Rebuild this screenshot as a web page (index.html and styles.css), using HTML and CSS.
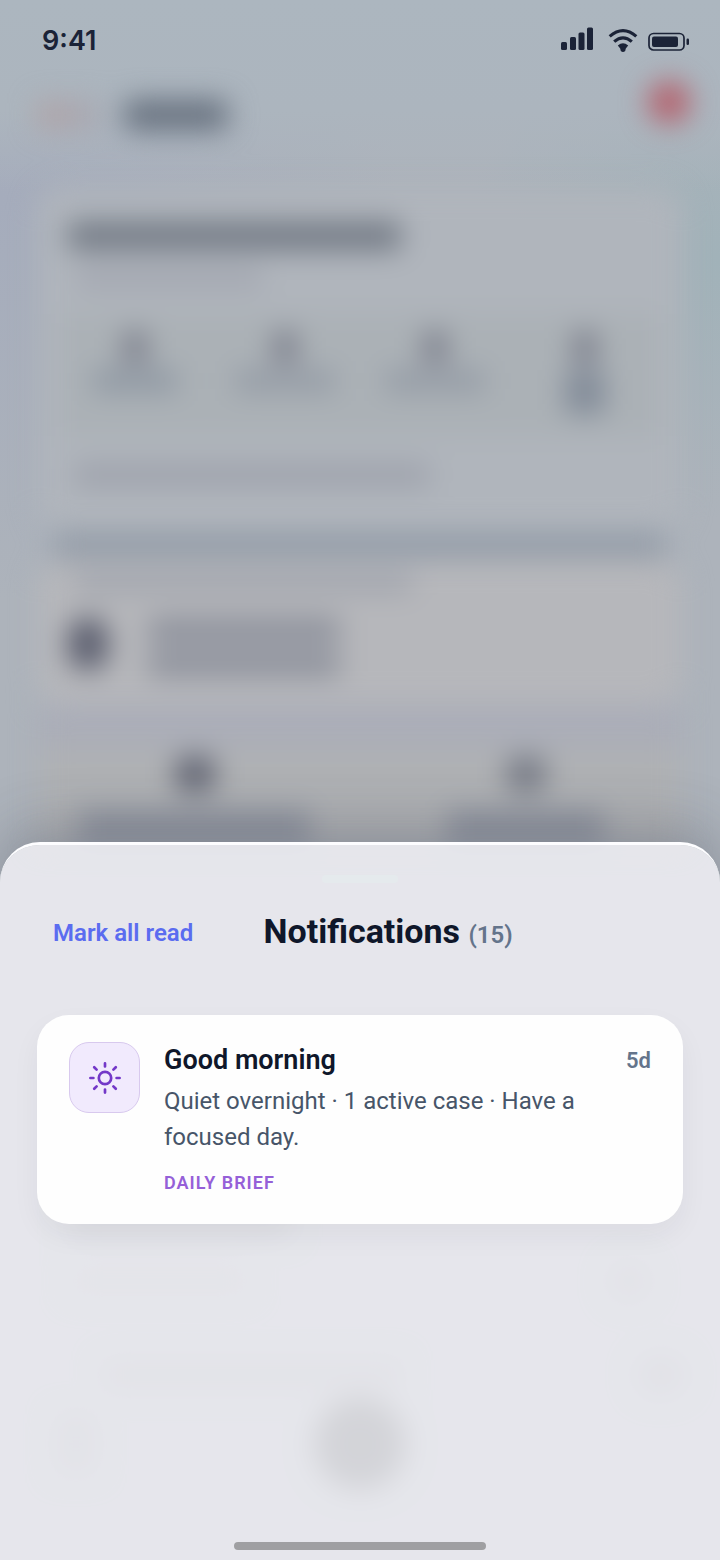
FILE: index.html
```html
<!DOCTYPE html>
<html lang="en">
<head>
  <meta charset="UTF-8">
  <meta name="viewport" content="width=device-width, initial-scale=1">
  <title>Notifications</title>
  <link rel="stylesheet" href="styles.css">
</head>
<body>
  <div class="screen">

    <!-- dashboard behind the sheet, blurred out -->
    <div class="page" aria-hidden="true">
      <div class="page-header">
        <span class="brand-mark"></span>
        <span class="brand-name"></span>
        <span class="alert-dot"></span>
      </div>
      <div class="page-card">
        <div class="line line-title"></div>
        <div class="line line-sub"></div>
        <div class="stats">
          <div class="stat"><i class="num"></i><i class="label"></i></div>
          <div class="stat"><i class="num"></i><i class="label wide"></i></div>
          <div class="stat"><i class="num"></i><i class="label wide"></i></div>
          <div class="stat"><i class="num"></i><i class="label tall"></i></div>
        </div>
        <div class="line line-note"></div>
      </div>
      <div class="divider"></div>
      <div class="page-card page-card-light">
        <div class="line line-label"></div>
        <div class="person">
          <span class="avatar"></span>
          <div class="person-text">
            <div class="line line-name"></div>
            <div class="line line-name"></div>
          </div>
        </div>
      </div>
      <div class="tiles">
        <div class="tile"><i class="tile-icon"></i><i class="tile-label"></i></div>
        <div class="tile"><i class="tile-icon soft"></i><i class="tile-label short"></i></div>
      </div>
      <div class="page-bottom">
        <div class="page-row row-first"><i class="row-title"></i></div>
        <div class="page-row"><i class="row-text"></i><i class="row-dot"></i></div>
        <div class="page-row"><i class="row-text long"></i><i class="row-dot big"></i></div>
      </div>
      <div class="tabs">
        <i class="tab"></i>
        <i class="tab-main"></i>
        <i class="tab faint"></i>
      </div>
    </div>

    <header class="status-bar">
      <span class="time">9:41</span>
      <div class="status-icons">
        <svg width="34" height="24" viewBox="0 0 34 24" fill="#1b2337">
          <rect x="1" y="14" width="6" height="8" rx="1.500"/>
          <rect x="10" y="9" width="6" height="13" rx="1.500"/>
          <rect x="18.500" y="4.500" width="6" height="17.500" rx="1.500"/>
          <rect x="27" y="-0.500" width="6" height="22.500" rx="1.500"/>
        </svg>
        <svg width="30" height="24" viewBox="0 0 30 24" fill="none" stroke="#1b2337" stroke-width="3.200">
          <path d="M1.700 8.400Q15-3.200 28.300 8.400"/>
          <path d="M6.200 13.600Q15 6 23.800 13.600"/>
          <path d="M9.800 17.400Q15 13.200 20.200 17.400L17.800 20.400 17.200 23Q15 25 12.800 23L12.200 20.400Z" fill="#1b2337" stroke="none"/>
        </svg>
        <svg width="42" height="20" viewBox="0 0 42 20">
          <rect x="1" y="1.500" width="35" height="16.500" rx="4.500" fill="none" stroke="#1b2337" stroke-width="1.700"/>
          <rect x="4" y="4.500" width="26" height="10.500" rx="2" fill="#1b2337"/>
          <rect x="38.500" y="6.500" width="2.500" height="6.500" rx="1.200" fill="#1b2337"/>
        </svg>
      </div>
    </header>

    <main class="sheet">
      <div class="grabber"></div>

      <div class="sheet-header">
        <button type="button" class="mark-read">Mark all read</button>
        <h1 class="sheet-title">Notifications <span class="count">(15)</span></h1>
        <span class="header-spacer"></span>
      </div>

      <ul class="list">
        <li class="card">
          <div class="card-icon">
            <svg width="36" height="36" viewBox="0 0 36 36" fill="none" stroke="#7338c8" stroke-width="2.700" stroke-linecap="round">
              <circle cx="18" cy="18" r="6.200"/>
              <path d="M18 3.400v3M18 29.600v3M3.400 18h3M29.600 18h3M7.200 7.200l2.400 2.400M26.400 26.400l2.400 2.400M7.200 28.800l2.400-2.400M26.400 9.600l2.400-2.400"/>
            </svg>
          </div>
          <div class="card-body">
            <div class="card-top">
              <h2 class="card-title">Good morning</h2>
              <time class="card-time">5d</time>
            </div>
            <p class="card-text">Quiet overnight · 1 active case · Have a focused day.</p>
            <span class="card-tag">DAILY BRIEF</span>
          </div>
        </li>
      </ul>

      <div class="home-indicator"></div>
    </main>
  </div>
</body>
</html>
```
FILE: styles.css
```css
* {
  box-sizing: border-box;
}

html, body {
  margin: 0;
  padding: 0;
  font-family: Roboto, "Liberation Sans", sans-serif;
}

i {
  display: block;
}

.screen {
  position: relative;
  display: flex;
  flex-direction: column;
  min-height: 100vh;
  overflow: hidden;
  background: linear-gradient(#acb6bf 0, #acb5be 110px, transparent 190px),
    radial-gradient(circle at 100% 260px, #a1b2b9 0, transparent 260px),
    radial-gradient(circle at 0 200px, #a5acbc 0, transparent 400px),
    #adb3bb;
}

/* blurred dashboard */
.page {
  position: absolute;
  inset: 0;
  padding: 70px 38px 0;
  filter: blur(14px);
}

.page-header {
  display: flex;
  align-items: center;
  height: 90px;
  margin-bottom: 28px;
}

.brand-mark {
  width: 62px;
  height: 26px;
  margin-right: 24px;
  background: linear-gradient(90deg, #b2a1a3, #a6a8b3);
}

.brand-name {
  width: 104px;
  height: 30px;
  border-radius: 8px;
  background: #66707e;
}

.alert-dot {
  width: 42px;
  height: 42px;
  margin: 0 -8px 26px auto;
  border-radius: 50%;
  background: #b4606b;
}

.page-card {
  height: 342px;
  padding: 34px 30px 0;
  border-radius: 24px;
  background: #b0b5bc;
}

.page-card-light {
  height: 144px;
  padding: 14px 30px 0;
  background: #b6b7bb;
}

.line {
  border-radius: 6px;
  background: #a2a6b0;
}

.line-title {
  width: 57%;
  height: 28px;
  background: #727984;
}

.line-sub {
  width: 32%;
  height: 20px;
  margin: 18px 8px 26px;
}

.stats {
  display: grid;
  grid-template-columns: repeat(4, 1fr);
  height: 122px;
  margin: 0 -8px;
  padding-top: 18px;
  background: #abb1b6;
}

.stat {
  display: flex;
  flex-direction: column;
  align-items: center;
  gap: 8px;
}

.num {
  width: 24px;
  height: 30px;
  background: #7a7d8a;
}

.label {
  width: 84px;
  height: 22px;
  background: #8f98a3;
}

.wide {
  width: 100px;
  background: #959ca6;
}

.tall {
  width: 40px;
  height: 44px;
  background: #838c99;
}

.line-note {
  width: 61%;
  height: 22px;
  margin: 28px 6px 0;
  background: #9da1ab;
}

.divider {
  height: 24px;
  margin: 3px 16px;
  background: #919aa6;
}

.line-label {
  width: 58%;
  height: 18px;
  margin: 0 6px;
  background: #9fa3ac;
}

.person {
  display: flex;
  gap: 40px;
  margin-top: 26px;
}

.avatar {
  width: 40px;
  height: 52px;
  border-radius: 18px;
  background: #5c5f6f;
}

.person-text {
  display: grid;
  gap: 10px;
  flex: 1;
}

.line-name {
  width: 38%;
  height: 24px;
  background: #8b8f9a;
}

.tiles {
  display: grid;
  grid-template-columns: 1fr 1fr;
  gap: 18px;
  margin-top: 2px;
  padding-top: 50px;
  background: linear-gradient(#aaadb8 30px, #afb1b4 50px);
}

.tile {
  display: flex;
  flex-direction: column;
  align-items: center;
  gap: 18px;
}

.tile-icon {
  width: 40px;
  height: 36px;
  border-radius: 12px;
  background: #636674;
}

.soft {
  background: #787c87;
}

.tile-label {
  width: 74%;
  height: 34px;
  background: #8f949f;
}

.short {
  width: 50%;
}

.page-bottom {
  display: grid;
  gap: 54px;
  margin-top: 363px;
}

.page-row {
  display: flex;
  align-items: center;
  justify-content: space-between;
  height: 40px;
}

.row-first {
  height: 0;
}

.row-title {
  width: 220px;
  height: 60px;
  margin-left: 32px;
  background: #777d86;
}

.row-text {
  width: 180px;
  height: 30px;
  margin-left: 32px;
  background: #a3a6ad;
}

.long {
  width: 300px;
  margin-left: 64px;
  background: #999ba3;
}

.row-dot {
  width: 42px;
  height: 42px;
  margin-right: 32px;
  border-radius: 50%;
  background: #999ba3;
}

.big {
  width: 50px;
  margin-right: -4px;
  background: #92949c;
}

.tabs {
  display: flex;
  align-items: center;
  justify-content: space-between;
  margin-top: 3px;
}

.tab {
  width: 40px;
  height: 60px;
  margin-left: 18px;
  background: #999ba3;
}

.tab-main {
  width: 92px;
  height: 92px;
  border-radius: 50%;
  background: #2e3336;
}

.faint {
  background: transparent;
  margin: 0 18px 0 0;
}

/* status bar */
.status-bar {
  position: relative;
  display: flex;
  align-items: center;
  justify-content: space-between;
  height: 80px;
  padding: 0 30px 0 42px;
  color: #1b2337;
}

.time {
  font-family: Inter, sans-serif;
  font-size: 27px;
  font-weight: 600;
}

.status-icons {
  display: flex;
  align-items: center;
  gap: 14px;
}

.status-icons svg {
  display: block;
  overflow: visible;
}

.status-icons svg:last-child {
  margin: 3px 0 0 -4px;
}

/* bottom sheet */
.sheet {
  position: relative;
  display: flex;
  flex-direction: column;
  min-height: 46vh;
  margin-top: auto;
  padding: 30px 37px 10px;
  border-top: 3px solid #fdfdff;
  border-radius: 40px 40px 0 0;
  background: rgba(239, 239, 243, 0.86);
  background-clip: padding-box;
  box-shadow: 0 -12px 60px rgba(50, 52, 70, 0.3);
}

.grabber {
  width: 76px;
  height: 8px;
  margin: 0 auto;
  border-radius: 4px;
  background: #e5eaed;
}

.sheet-header {
  display: flex;
  align-items: center;
  justify-content: space-between;
  height: 48px;
  margin: 26px 16px 58px;
}

.mark-read {
  padding: 0;
  border: 0;
  background: none;
  color: #5b6cf0;
  font-family: inherit;
  font-size: 24px;
  font-weight: 600;
  line-height: 32px;
}

.sheet-title {
  margin: 0;
  color: #0f172a;
  font-size: 34px;
  font-weight: 700;
  line-height: 48px;
}

.count {
  color: #64748b;
  font-size: 24px;
  font-weight: 600;
}

.header-spacer {
  width: 84px;
}

.list {
  margin: 0;
  padding: 0;
  list-style: none;
}

.card {
  display: flex;
  gap: 24px;
  padding: 27px 32px 28px;
  border-radius: 32px;
  background: #fefefe;
  box-shadow: 0 12px 28px rgba(30, 40, 50, 0.05);
}

.card-icon {
  display: flex;
  flex: none;
  align-items: center;
  justify-content: center;
  width: 71px;
  height: 71px;
  border: 1px solid #d8c9ee;
  border-radius: 20px;
  background: #f1eafd;
}

.card-body {
  flex: 1;
}

.card-top {
  display: flex;
  align-items: center;
  justify-content: space-between;
  height: 36px;
}

.card-title {
  margin: 0;
  color: #0f172a;
  font-size: 27px;
  font-weight: 600;
}

.card-time {
  color: #64748b;
  font-size: 22px;
  font-weight: 600;
}

.card-text {
  margin: 5px 0 14px;
  color: #475569;
  font-size: 24px;
  line-height: 36px;
}

.card-tag {
  display: block;
  color: #9560d8;
  font-size: 18px;
  font-weight: 600;
  line-height: 27px;
  letter-spacing: 1px;
}

.home-indicator {
  width: 252px;
  height: 8px;
  margin: auto auto 0;
  border-radius: 4px;
  background: #9f9fa2;
}
```
